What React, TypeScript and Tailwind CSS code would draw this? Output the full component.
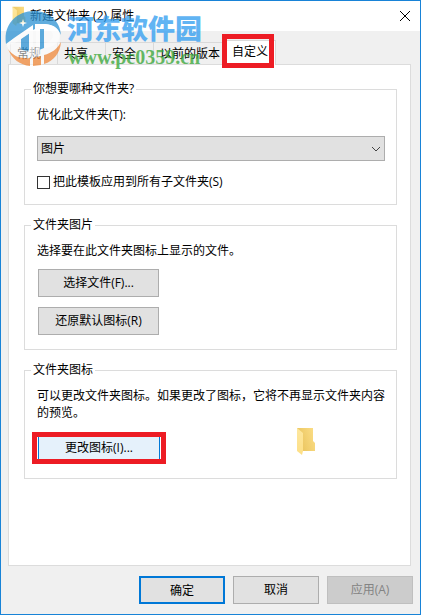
import { ReactNode } from 'react';
import clsx from 'clsx';

const TABS = [
  { label: '常规', width: 'w-[47px]' },
  { label: '共享', width: 'w-12' },
  { label: '安全', width: 'w-12' },
  { label: '以前的版本', width: 'w-[69px]' },
];

const BUTTON = 'h-7 border text-center leading-[26px]';

function FolderIcon({ className }: { className?: string }) {
  return (
    <svg aria-hidden viewBox="0 0 20 28" className={className}>
      <defs>
        <linearGradient id="folder-back" x1="0" y1="0.6" x2="1" y2="0.2">
          <stop offset="0" stopColor="#e9c35c" />
          <stop offset="1" stopColor="#fbdd85" />
        </linearGradient>
        <linearGradient id="folder-front" x1="0" y1="0" x2="0" y2="1">
          <stop offset="0" stopColor="#fde79f" />
          <stop offset="1" stopColor="#fddf86" />
        </linearGradient>
      </defs>
      <path d="M1 1h16v13l2 2v8H5z" fill="url(#folder-back)" />
      <path d="M1 1l6 5v18l-1 4-5-4z" fill="url(#folder-front)" />
    </svg>
  );
}

function Watermark() {
  return (
    <div aria-hidden className="pointer-events-none absolute left-[4px] top-[9px] z-20 flex opacity-75">
      <svg viewBox="0 0 58 58" className="size-[58px]">
        <circle cx="28" cy="29" r="27" fill="#fff" fillOpacity="0.7" />
        {/* Blue sky over the roof line */}
        <path d="M1 34C-2 15 11 1 29 1c15 0 26 10 27 24-3-7-9-11-18-11h-8v5L9 29c-4 2-6 3-8 5z" fill="#2b92d4" />
        <path d="M16 29l9-6v17c-3 1-6 1-9-1zM34 19h5v19l-5 2z" fill="#2b92d4" />
        {/* Orange ground and swoosh */}
        <path d="M3 39c5 7 12 10 22 9v8C15 55 7 49 3 39zM28 48l8-2v9l-8 1zM39 45c8-2 13-6 17-13-1 11-7 19-17 22z" fill="#f0883a" />
        <path d="M1 37c2-4 5-7 8-9l19-13v32h-4V23L10 33c-4 1-7 2-9 4zM31 14h9c20 1 19 22 0 24v-5c11-2 10-14 0-14h-5v27h-4z" fill="#fff" />
        <path d="M18 9l1 3 3 1-3 1-1 3-1-3-3-1 3-1z" fill="#fff" />
      </svg>
      <div className="ml-1 whitespace-nowrap">
        <div className="mt-1 font-['Noto_Sans_CJK_SC',sans-serif] text-[27px] font-black leading-7 text-[#2d9bf0]">
          河东软件园
        </div>
        <div className="ml-px mt-[5px] font-['Liberation_Serif',serif] text-xl font-bold leading-5 text-[#35a535]">
          www.pc0359.cn
        </div>
      </div>
    </div>
  );
}

function Group({ title, className, children }: { title: string; className?: string; children: ReactNode }) {
  return (
    <fieldset className={clsx('border border-[#dcdcdc] pb-[14px] pl-3 pr-[11px]', className)}>
      <legend className="-ml-[6px] px-[2px] leading-4">{title}</legend>
      {children}
    </fieldset>
  );
}

export default function App() {
  return (
    <div className="relative flex min-h-screen flex-col border border-[#1883d7] bg-[#f0f0f0] font-['Open_Sans','Noto_Sans_CJK_SC',sans-serif] text-xs leading-4 text-black">
      {/* Title bar */}
      <header className="flex h-[30px] shrink-0 items-center bg-white pl-2 pr-[9px]">
        <FolderIcon className="h-5 w-5" />
        <h1 className="ml-px">新建文件夹 (2) 属性</h1>
        <button type="button" aria-label="关闭" className="ml-auto">
          <svg viewBox="0 0 12 12" className="size-3" stroke="#000" fill="none">
            <path d="M1 1l10 10M11 1L1 11" />
          </svg>
        </button>
      </header>

      <main className="ml-[7px] mr-[9px] flex grow flex-col">
        {/* Tabs */}
        <div role="tablist" className="relative z-10 -mb-px mt-1 flex h-[30px] items-end pl-[2px]">
          {TABS.map(({ label, width }) => (
            <button
              key={label}
              type="button"
              role="tab"
              aria-selected={false}
              className={clsx('mb-px h-[22px] whitespace-nowrap border-l border-t border-[#d9d9d9] pl-[6px] text-left', width)}
            >
              {label}
            </button>
          ))}
          <button
            type="button"
            role="tab"
            aria-selected
            className="relative h-[25px] w-[54px] border border-b-0 border-[#d9d9d9] bg-white pb-[2px] pl-[9px] text-left"
          >
            自定义
            <span aria-hidden className="absolute -bottom-[3px] -left-px -top-[7px] right-px border-[5px] border-[#ed1c24]" />
          </button>
        </div>

        <section className="grow border border-[#dcdcdc] bg-white pb-[84px] pl-[15px] pr-[13px] pt-4">
          <Group title="你想要哪种文件夹?">
            <label htmlFor="template" className="mt-[10px] block">
              优化此文件夹(T):
            </label>
            <div className="relative mt-[13px]">
              <select
                id="template"
                className="block h-[25px] w-full appearance-none border border-[#adadad] bg-[#e1e1e1] px-[3px] leading-4"
              >
                <option>图片</option>
              </select>
              <svg aria-hidden viewBox="0 0 10 6" className="pointer-events-none absolute right-1 top-[10px] h-[6px] w-[10px]" fill="none" stroke="#444">
                <path d="M1 1l4 4 4-4" />
              </svg>
            </div>
            <label className="mt-[13px] flex items-center gap-[3px]">
              <input type="checkbox" className="size-[13px] appearance-none border border-[#333] bg-white checked:bg-[#0078d7]" />
              把此模板应用到所有子文件夹(S)
            </label>
          </Group>

          <Group title="文件夹图片" className="mt-3">
            <p className="mt-[10px]">选择要在此文件夹图标上显示的文件。</p>
            <div className="ml-px mt-[10px] flex w-[121px] flex-col gap-[10px]">
              <button type="button" className={clsx(BUTTON, 'border-[#adadad] bg-[#e1e1e1]')}>选择文件(F)...</button>
              <button type="button" className={clsx(BUTTON, 'border-[#adadad] bg-[#e1e1e1]')}>还原默认图标(R)</button>
            </div>
          </Group>

          <Group title="文件夹图标" className="mt-3">
            <p className="mt-[9px] leading-[17px]">可以更改文件夹图标。如果更改了图标，它将不再显示文件夹内容的预览。</p>
            <div className="mt-[6px] flex items-start">
              <div className="-ml-[5px] mt-[5px] w-[134px] border-[5px] border-[#ed1c24] px-px">
                <button type="button" className="block h-[22px] w-full border-x border-[#0078d7] bg-[#e5f1fb] text-center leading-[22px]">
                  更改图标(I)...
                </button>
              </div>
              <FolderIcon className="ml-[130px] h-7 w-5" />
            </div>
          </Group>
        </section>
      </main>

      <footer className="mr-[7px] flex justify-end gap-2 py-[10px]">
        <button type="button" className={clsx(BUTTON, 'w-[86px] border-2 border-[#0078d7] bg-[#e1e1e1] leading-6')}>确定</button>
        <button type="button" className={clsx(BUTTON, 'w-[86px] border-[#adadad] bg-[#e1e1e1]')}>取消</button>
        <button type="button" disabled className={clsx(BUTTON, 'w-[86px] border-[#bfbfbf] bg-[#ccc] text-[#838383]')}>应用(A)</button>
      </footer>

      <Watermark />
    </div>
  );
}
